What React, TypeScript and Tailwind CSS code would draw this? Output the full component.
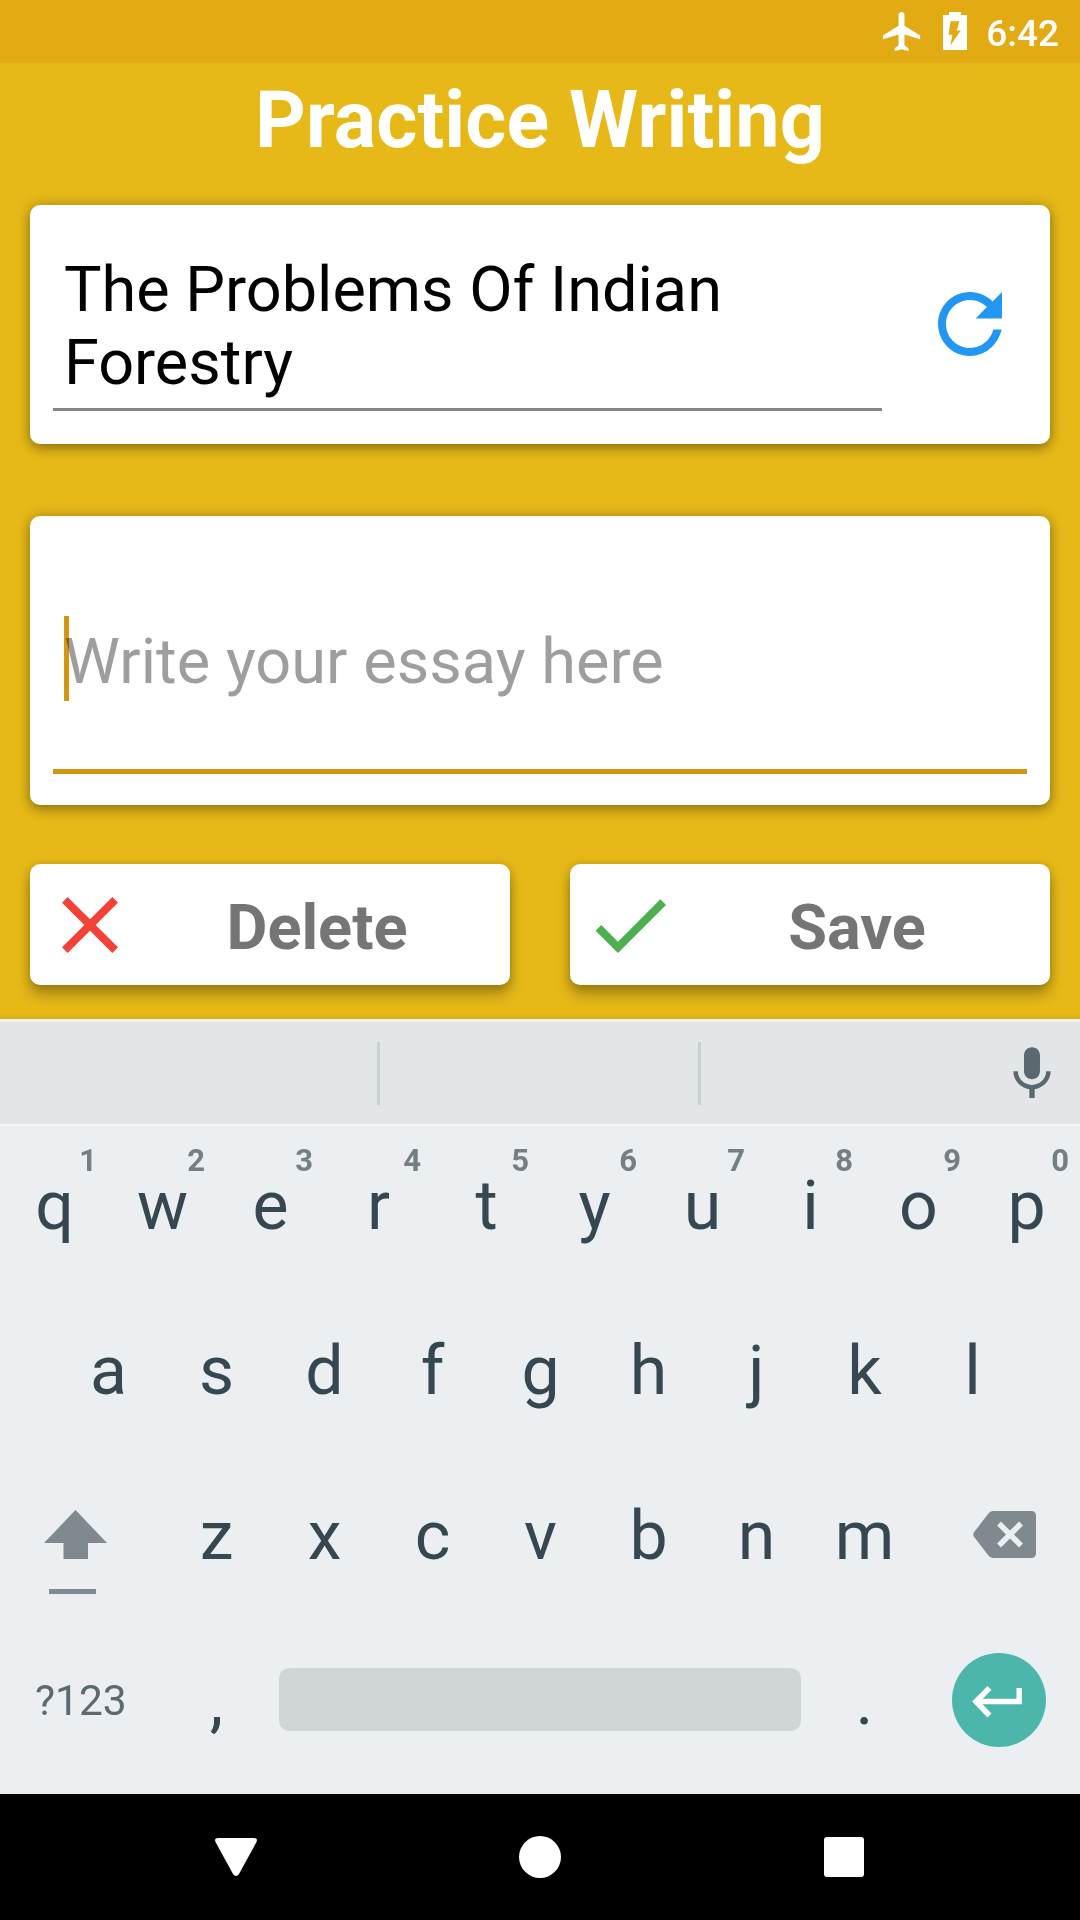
import React from "react";

const topRow = ["q", "w", "e", "r", "t", "y", "u", "i", "o", "p"];
const homeRow = ["a", "s", "d", "f", "g", "h", "j", "k", "l"];
const bottomRow = ["z", "x", "c", "v", "b", "n", "m"];

const cardBase = "rounded-[10px] bg-white";
const cardShadow = "shadow-[0_6px_12px_rgba(0,0,0,0.24),0_0_13px_rgba(0,0,0,0.24)]";
const buttonShadow = "shadow-[0_10px_14px_rgba(0,0,0,0.26),0_1px_10px_rgba(0,0,0,0.2)]";

function StatusBar() {
  return (
    <div className="flex h-[63px] shrink-0 items-start justify-end bg-[#e2ab13] pr-[21px] text-white">
      <svg className="mt-[8px] mr-[17px] h-[47px] w-[47px] shrink-0" viewBox="0 0 24 24" fill="currentColor">
        <path d="M21 16v-2l-8-5V3.5c0-.83-.67-1.5-1.5-1.5S10 2.67 10 3.5V9l-8 5v2l8-2.5V19l-2 1.5V22l3.5-1 3.5 1v-1.5L13 19v-5.5l8 2.5z" />
      </svg>
      <svg className="mt-[12px] mr-[19px] h-[38px] w-[24px] shrink-0" viewBox="0 0 24 38">
        <path fill="#fff" d="M6 0h12v3h6v35H0V3h6z" />
        <path fill="#e2ab13" d="M7.5 9.3h8.8l-2.4 9.2h4L7.3 33.5l2.1-10.8H5.6z" />
      </svg>
      <span className="mt-[12px] text-[37px] leading-[43px] font-medium">6:42</span>
    </div>
  );
}

function TopicCard() {
  return (
    <section className={`${cardBase} ${cardShadow} flex h-[239px] items-start pt-[48px] pl-[23px]`}>
      <div className="w-[829px]">
        <div className="h-[155px] w-[829px] px-[11px] text-[63px] leading-[73px] text-black">
          The Problems Of Indian
          <br />
          Forestry
        </div>
        <div className="h-[3px] bg-[#858585]" />
      </div>
      <svg className="mt-[23px] ml-[40px] h-[96px] w-[96px] shrink-0" viewBox="0 0 24 24" fill="#2196f3">
        <path d="M17.65 6.35C16.2 4.9 14.21 4 12 4c-4.42 0-7.99 3.58-7.99 8s3.57 8 7.99 8c3.73 0 6.84-2.55 7.93-6.6h-2.08c-.82 2.93-3.24 4.6-5.85 4.6-3.31 0-6-2.69-6-6s2.69-6 6-6c1.66 0 3.14.69 4.22 1.78L13.400 10.600h6.600V4l-2.35 2.35z" />
      </svg>
    </section>
  );
}

function EssayCard() {
  return (
    <section className={`${cardBase} ${cardShadow} mt-[72px] h-[289px] px-[23px] pt-[100px]`}>
      <div className="relative h-[153px] px-[11px] pt-[9px] text-[63px] leading-[73px] text-[#9e9e9e]">
        <span className="absolute top-0 left-[11px] h-[85px] w-[5px] bg-[#d39512]" />
        <span className="relative tracking-[0.06px] mix-blend-multiply">Write your essay here</span>
      </div>
      <div className="h-[5px] bg-[#d39512]" />
    </section>
  );
}

function ActionButton({ label, color, path }: { label: string; color: string; path: string }) {
  return (
    <button className={`${cardBase} ${buttonShadow} flex h-[121px] w-[480px] items-center pr-[14px] pl-[12px]`}>
      <svg className="h-[96px] w-[96px] shrink-0" viewBox="0 0 24 24" fill={color}>
        <path d={path} />
      </svg>
      <span className="flex-1 pt-[6px] text-center text-[63px] leading-[73px] font-bold text-[#757575]">{label}</span>
    </button>
  );
}

function Key({ label, hint }: { label: string; hint?: string }) {
  return (
    <div className="relative flex w-[108px] shrink-0 items-center justify-center">
      <span className="pl-px text-[68px] leading-[80px]">{label}</span>
      {hint && (
        <span className="absolute top-[17px] right-[11px] text-[31px] leading-[36px] font-bold text-[#757f83]">
          {hint}
        </span>
      )}
    </div>
  );
}

function SuggestionBar() {
  return (
    <div className="flex h-[107px] items-center justify-end border-t-[3px] border-b-2 border-t-[#f3f0ea] border-b-[#f4f8fa] bg-[#e2e6e9]">
      <div className="h-[63px] w-[3px] bg-[#cacfd2]" />
      <div className="ml-[318px] h-[63px] w-[3px] bg-[#cacfd2]" />
      <svg className="mt-[2px] mr-[16px] ml-[299px] h-[64px] w-[64px]" viewBox="0 0 24 24" fill="#5b686f">
        <path d="M12 14c1.66 0 2.99-1.34 2.99-3L15 5c0-1.66-1.34-3-3-3S9 3.34 9 5v6c0 1.66 1.34 3 3 3zm5.3-3c0 3-2.54 5.1-5.3 5.1S6.7 14 6.7 11H5c0 3.41 2.72 6.23 6 6.72V21h2v-3.28c3.28-.48 6-3.3 6-6.72h-1.7z" />
      </svg>
    </div>
  );
}

function Keyboard() {
  return (
    <div className="h-[775px] shrink-0 bg-[#ebeff2] text-[#37474f]">
      <SuggestionBar />
      <div className="flex h-[162px] pb-[2px]">
        {topRow.map((k, i) => (
          <Key key={k} label={k} hint={String((i + 1) % 10)} />
        ))}
      </div>
      <div className="flex h-[165px] justify-center">
        {homeRow.map((k) => (
          <Key key={k} label={k} />
        ))}
      </div>
      <div className="flex h-[165px]">
        <div className="w-[162px] pt-[57px] pl-[44px]">
          <svg className="h-[49px] w-[63px]" viewBox="0 0 63 49" fill="#808a8e">
            <path d="M31.5 0 63 33H44v16H19.500V33H0z" />
          </svg>
          <div className="mt-[30px] ml-[5px] h-[5px] w-[47px] bg-[#808a91]" />
        </div>
        {bottomRow.map((k) => (
          <Key key={k} label={k} />
        ))}
        <div className="w-[162px] pt-[58px] pl-[55px]">
          <svg className="h-[47px] w-[63px]" viewBox="0 0 63 47">
            <path fill="#808a8e" d="M20 0h38q5 0 5 5v37q0 5-5 5H20q-3 0-5-3L.8 25.500q-1-2 0-4L15 3q2-3 5-3z" />
            <path stroke="#ebeff2" strokeWidth="5.500" d="m26 12.500 22 22M48 12.500l-22 22" />
          </svg>
        </div>
      </div>
      <div className="flex h-[165px] items-center">
        <div className="w-[162px] pl-[35px] text-[42.5px] leading-[50px] text-[#5c6a70]">?123</div>
        <Key label="," />
        <div className="mx-[9px] mb-[2px] h-[63px] w-[522px] rounded-[10px] bg-[#d0d5d8]" />
        <Key label="." />
        <div className="mb-[2px] ml-[34px] flex h-[94px] w-[94px] items-center justify-center rounded-full bg-[#4db6ac]">
          <svg className="mt-[5px] mr-[4px] h-[32px] w-[50px]" viewBox="0 0 50 32" fill="none" stroke="#fff" strokeWidth="5.500">
            <path d="M47.200 2v13.500H4M17.500 2 4 15.500l13.500 14" />
          </svg>
        </div>
      </div>
    </div>
  );
}

function NavigationBar() {
  return (
    <div className="flex h-[126px] shrink-0 items-center justify-center gap-[262px] bg-black">
      <svg className="h-[42px] w-[42px]" viewBox="0 0 42 42" fill="#fff">
        <path d="M3 2h36q4 0 2.500 4L24 38q-3 4-6 0L.5 6Q-1 2 3 2z" />
      </svg>
      <div className="h-[42px] w-[42px] rounded-full bg-white" />
      <div className="flex h-[42px] w-[42px] items-center justify-center">
        <div className="h-[40px] w-[40px] rounded-[3px] bg-white" />
      </div>
    </div>
  );
}

export default function App() {
  return (
    <div className="flex h-[1920px] w-[1080px] flex-col overflow-hidden bg-[#e6b918] font-['Roboto',sans-serif]">
      <StatusBar />
      <main className="flex h-[956px] shrink-0 flex-col px-[30px]">
        <h1 className="mb-[28px] h-[114px] shrink-0 text-center text-[79px] leading-[114px] font-bold tracking-[0.1px] text-white">
          Practice Writing
        </h1>
        <TopicCard />
        <EssayCard />
        <div className="mt-[59px] flex justify-between">
          <ActionButton
            label="Delete"
            color="#f44336"
            path="M19 6.410 17.590 5 12 10.590 6.410 5 5 6.410 10.590 12 5 17.590 6.410 19 12 13.410 17.590 19 19 17.590 13.410 12z"
          />
          <ActionButton label="Save" color="#4caf50" path="M9 16.170 4.830 12l-1.420 1.410L9 19 21 7l-1.410-1.410z" />
        </div>
        <div className="-mx-[30px] mt-auto h-[6px] shrink-0 bg-linear-to-b from-transparent to-[#d9ae17]" />
      </main>
      <Keyboard />
      <NavigationBar />
    </div>
  );
}
